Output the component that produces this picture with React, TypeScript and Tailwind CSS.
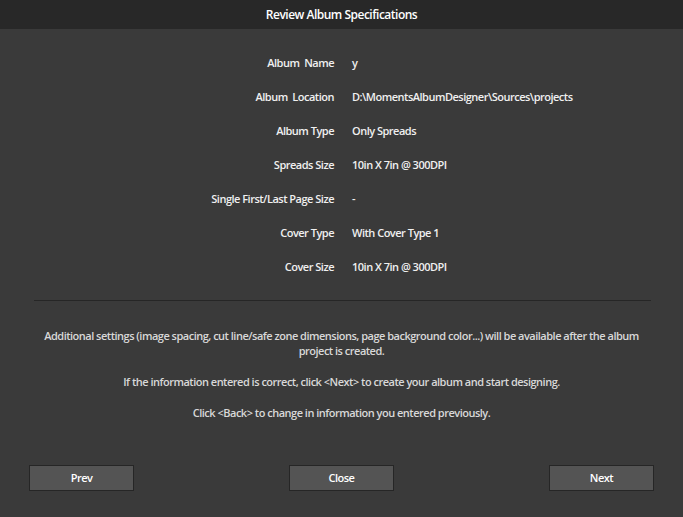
import React from "react";

const rows: [string, string][] = [
  ["Album  Name", "y"],
  ["Album  Location", "D:\\MomentsAlbumDesigner\\Sources\\projects"],
  ["Album Type", "Only Spreads"],
  ["Spreads Size", "10in X 7in @ 300DPI"],
  ["Single First/Last Page Size", "-"],
  ["Cover Type", "With Cover Type 1"],
  ["Cover Size", "10in X 7in @ 300DPI"],
];

export default function App() {
  return (
    <div
      className="w-[683px] h-[517px] flex flex-col bg-[#3a3a3a] text-[#f0f0f0] overflow-hidden tracking-[-0.5px]"
      style={{ fontFamily: '"Open Sans", "Noto Sans", sans-serif' }}
    >
      <div className="h-[29px] shrink-0 bg-[#282828] flex items-center justify-center text-[12px] font-semibold text-white">
        Review Album Specifications
      </div>
      <div className="flex flex-col pt-[17px]">
        {rows.map(([label, value]) => (
          <div key={label} className="h-[34px] flex items-center text-[11px] font-semibold">
            <div className="w-[334px] text-right whitespace-pre">{label}</div>
            <div className="pl-[18px] whitespace-pre">{value}</div>
          </div>
        ))}
      </div>
      <div className="mt-[16px] ml-[34px] mr-[32px] h-[1px] bg-[#262626]" />
      <div className="mt-[27px] px-[36px] flex flex-col gap-[16px] text-[11px] leading-[15px] font-semibold text-[#d8d8d8] text-center">
        <p>
          Additional settings (image spacing, cut line/safe zone dimensions, page background color...) will be available after the album project is created.
        </p>
        <p>If the information entered is correct, click &lt;Next&gt; to create your album and start designing.</p>
        <p>Click &lt;Back&gt; to change in information you entered previously.</p>
      </div>
      <div className="mt-auto mb-[26px] px-[29px] flex justify-between">
        {["Prev", "Close", "Next"].map((b) => (
          <button
            key={b}
            className="w-[105px] h-[26px] bg-[#545454] border border-[#262626] text-[11px] font-semibold text-white tracking-[-0.5px]"
          >
            {b}
          </button>
        ))}
      </div>
    </div>
  );
}
